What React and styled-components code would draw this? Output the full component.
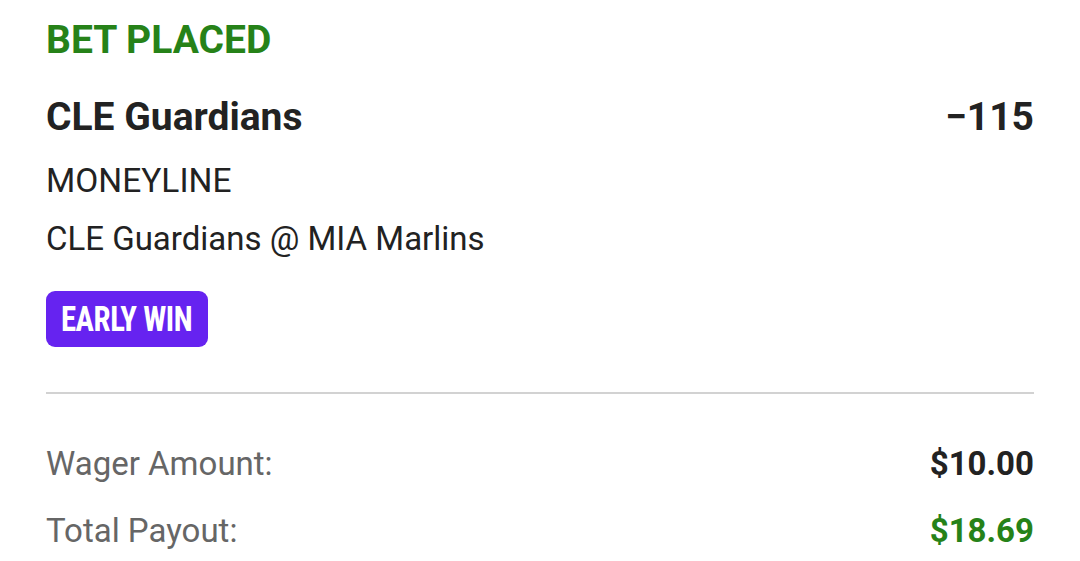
import React from "react";
import styled, { createGlobalStyle } from "styled-components";

const Global = createGlobalStyle`
  html, body { margin: 0; padding: 0; background: #ffffff; overflow: hidden; }
  body { font-family: Roboto, "Noto Sans", sans-serif; -webkit-font-smoothing: antialiased; }
`;

const Card = styled.div`
  width: 1080px;
  height: 561px;
  overflow: hidden;
  box-sizing: border-box;
  padding: 18px 46px 0 46px;
  background: #fff;
  display: flex;
  flex-direction: column;

  & > * {
    flex-shrink: 0;
  }
`;

const Status = styled.div`
  font-size: 39px;
  font-weight: 700;
  color: #268218;
  line-height: 44px;
`;

const SelectionRow = styled.div`
  display: flex;
  justify-content: space-between;
  align-items: baseline;
  margin-top: 33px;
  font-size: 39px;
  font-weight: 700;
  color: #222;
  line-height: 44px;
`;

const Details = styled.div`
  margin-top: 13px;
  display: flex;
  flex-direction: column;
`;

const Line = styled.div`
  font-size: ${(p) => p.$size || 33}px;
  font-weight: 400;
  color: #222;
  line-height: 58px;
`;

const Badge = styled.div`
  align-self: flex-start;
  margin-top: 23px;
  width: 162px;
  height: 56px;
  display: flex;
  align-items: center;
  justify-content: center;
  background: #6623f0;
  border-radius: 9px;
  color: #fff;
  font-family: "Liberation Sans Narrow", "Roboto", sans-serif;
  font-stretch: condensed;
  font-weight: 700;
  font-size: 35px;
  letter-spacing: -0.5px;
`;

const BadgeText = styled.span`
  display: inline-block;
  transform: scaleX(0.88);
  white-space: nowrap;
`;

const Divider = styled.hr`
  margin: 45px 0 0 0;
  border: none;
  height: 2px;
  background: #d2d2d2;
`;

const Rows = styled.div`
  margin-top: 36px;
  display: flex;
  flex-direction: column;
`;

const SummaryRow = styled.div`
  display: flex;
  justify-content: space-between;
  align-items: baseline;
  line-height: 67px;
`;

const Label = styled.span`
  font-size: 33px;
  color: #666;
`;

const Value = styled.span`
  font-size: 33px;
  font-weight: 700;
  color: ${(p) => (p.$positive ? "#268218" : "#222")};
`;

export default function App() {
  return (
    <>
      <Global />
      <Card>
        <Status>BET PLACED</Status>
        <SelectionRow>
          <span>CLE Guardians</span>
          <span>−115</span>
        </SelectionRow>
        <Details>
          <Line $size={33.5}>MONEYLINE</Line>
          <Line>CLE Guardians @ MIA Marlins</Line>
        </Details>
        <Badge>
          <BadgeText>EARLY WIN</BadgeText>
        </Badge>
        <Divider />
        <Rows>
          <SummaryRow>
            <Label>Wager Amount:</Label>
            <Value>$10.00</Value>
          </SummaryRow>
          <SummaryRow>
            <Label>Total Payout:</Label>
            <Value $positive>$18.69</Value>
          </SummaryRow>
        </Rows>
      </Card>
    </>
  );
}
